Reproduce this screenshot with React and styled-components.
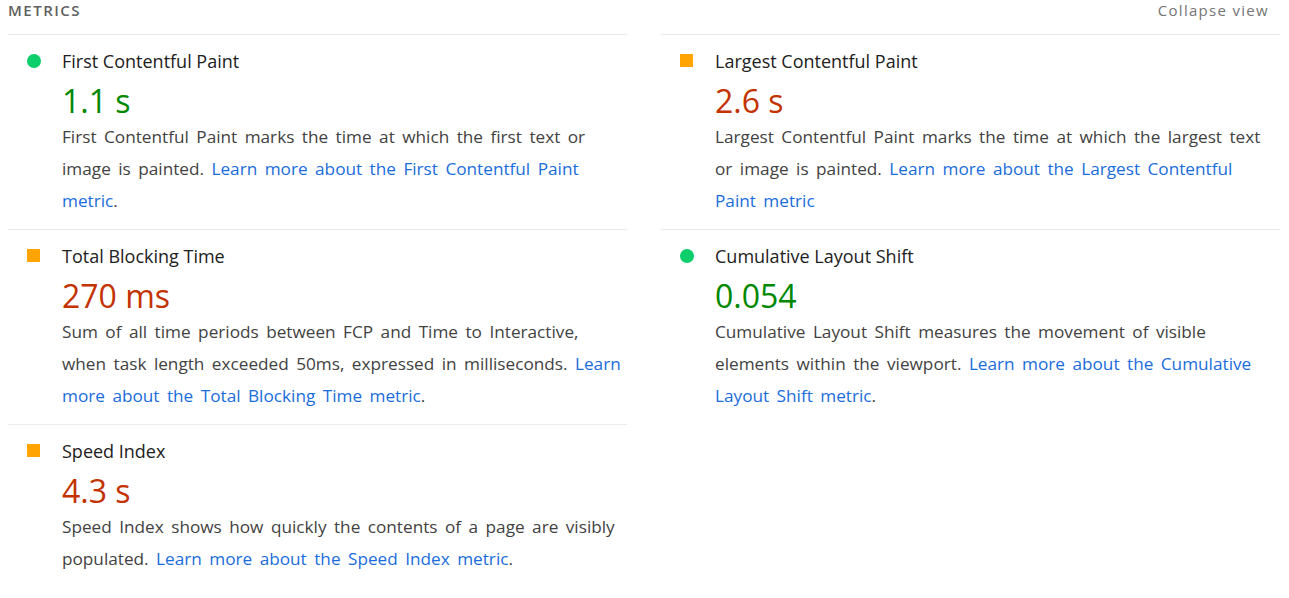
import styled, { createGlobalStyle } from "styled-components";

const GlobalStyle = createGlobalStyle`
  body {
    margin: 0;
    background: #fff;
    font-family: "Open Sans", "Noto Sans", sans-serif;
    color: #212121;
  }
`;

const metrics = [
  {
    id: "fcp",
    title: "First Contentful Paint",
    value: "1.1 s",
    rating: "pass",
    text: "First Contentful Paint marks the time at which the first text or image is painted.",
    link: "Learn more about the First Contentful Paint metric",
  },
  {
    id: "lcp",
    title: "Largest Contentful Paint",
    value: "2.6 s",
    rating: "average",
    text: "Largest Contentful Paint marks the time at which the largest text or image is painted.",
    link: "Learn more about the Largest Contentful Paint metric",
    noDot: true,
  },
  {
    id: "tbt",
    title: "Total Blocking Time",
    value: "270 ms",
    rating: "average",
    text: "Sum of all time periods between FCP and Time to Interactive, when task length exceeded 50ms, expressed in milliseconds.",
    link: "Learn more about the Total Blocking Time metric",
  },
  {
    id: "cls",
    title: "Cumulative Layout Shift",
    value: "0.054",
    rating: "pass",
    text: "Cumulative Layout Shift measures the movement of visible elements within the viewport.",
    link: "Learn more about the Cumulative Layout Shift metric",
  },
  {
    id: "si",
    title: "Speed Index",
    value: "4.3 s",
    rating: "average",
    text: "Speed Index shows how quickly the contents of a page are visibly populated.",
    link: "Learn more about the Speed Index metric",
  },
];

const App = () => {
  return (
    <>
      <GlobalStyle />
      <Section>
        <Header>
          <GroupTitle>Metrics</GroupTitle>
          <Toggle>Collapse view</Toggle>
        </Header>
        <Grid>
          {metrics.map((m) => (
            <Metric key={m.id}>
              <Icon $rating={m.rating} />
              <Body>
                <Title>{m.title}</Title>
                <Value $rating={m.rating}>{m.value}</Value>
                <Description>
                  {m.text} <Link href="#">{m.link}</Link>
                  {m.noDot ? "" : "."}
                </Description>
              </Body>
            </Metric>
          ))}
        </Grid>
      </Section>
    </>
  );
};

export default App;

const Section = styled.section`
  padding: 0 9px 0 8px;
`;

const Header = styled.div`
  display: flex;
  justify-content: space-between;
  align-items: flex-start;
  height: 34px;
  padding-right: 11px;
`;

const GroupTitle = styled.h2`
  margin: 0;
  font-size: 15px;
  line-height: 20px;
  font-weight: 600;
  letter-spacing: 1.5px;
  text-transform: uppercase;
  color: #616161;
`;

const Toggle = styled.span`
  font-size: 15px;
  line-height: 20px;
  letter-spacing: 1.3px;
  color: #757575;
  cursor: pointer;
`;

const Grid = styled.div`
  display: grid;
  grid-template-columns: 1fr 1fr;
  column-gap: 34px;
`;

const Metric = styled.div`
  display: grid;
  grid-template-columns: 14px 1fr;
  column-gap: 21px;
  align-items: start;
  border-top: 1px solid #ebebeb;
  padding: 10px 3px 12px 19px;
`;

// pass = green dot, average = orange square
const Icon = styled.span`
  margin-top: 9px;
  width: ${(props) => (props.$rating === "pass" ? "14px" : "13px")};
  height: ${(props) => (props.$rating === "pass" ? "14px" : "13px")};
  border-radius: ${(props) => (props.$rating === "pass" ? "50%" : "0")};
  background: ${(props) => (props.$rating === "pass" ? "#0cce6b" : "#ffa400")};
`;

const Body = styled.div`
  min-width: 0;
`;

const Title = styled.div`
  font-size: 18px;
  line-height: 32px;
  color: #212121;
`;

const Value = styled.div`
  padding-top: 4px;
  font-size: 32px;
  line-height: 40px;
  color: ${(props) => (props.$rating === "pass" ? "#008800" : "#c33300")};
`;

const Description = styled.div`
  font-size: 17.2px;
  line-height: 32px;
  word-spacing: 3px;
  color: #424242;
`;

const Link = styled.a`
  color: #1a6ddb;
  text-decoration: none;
`;
